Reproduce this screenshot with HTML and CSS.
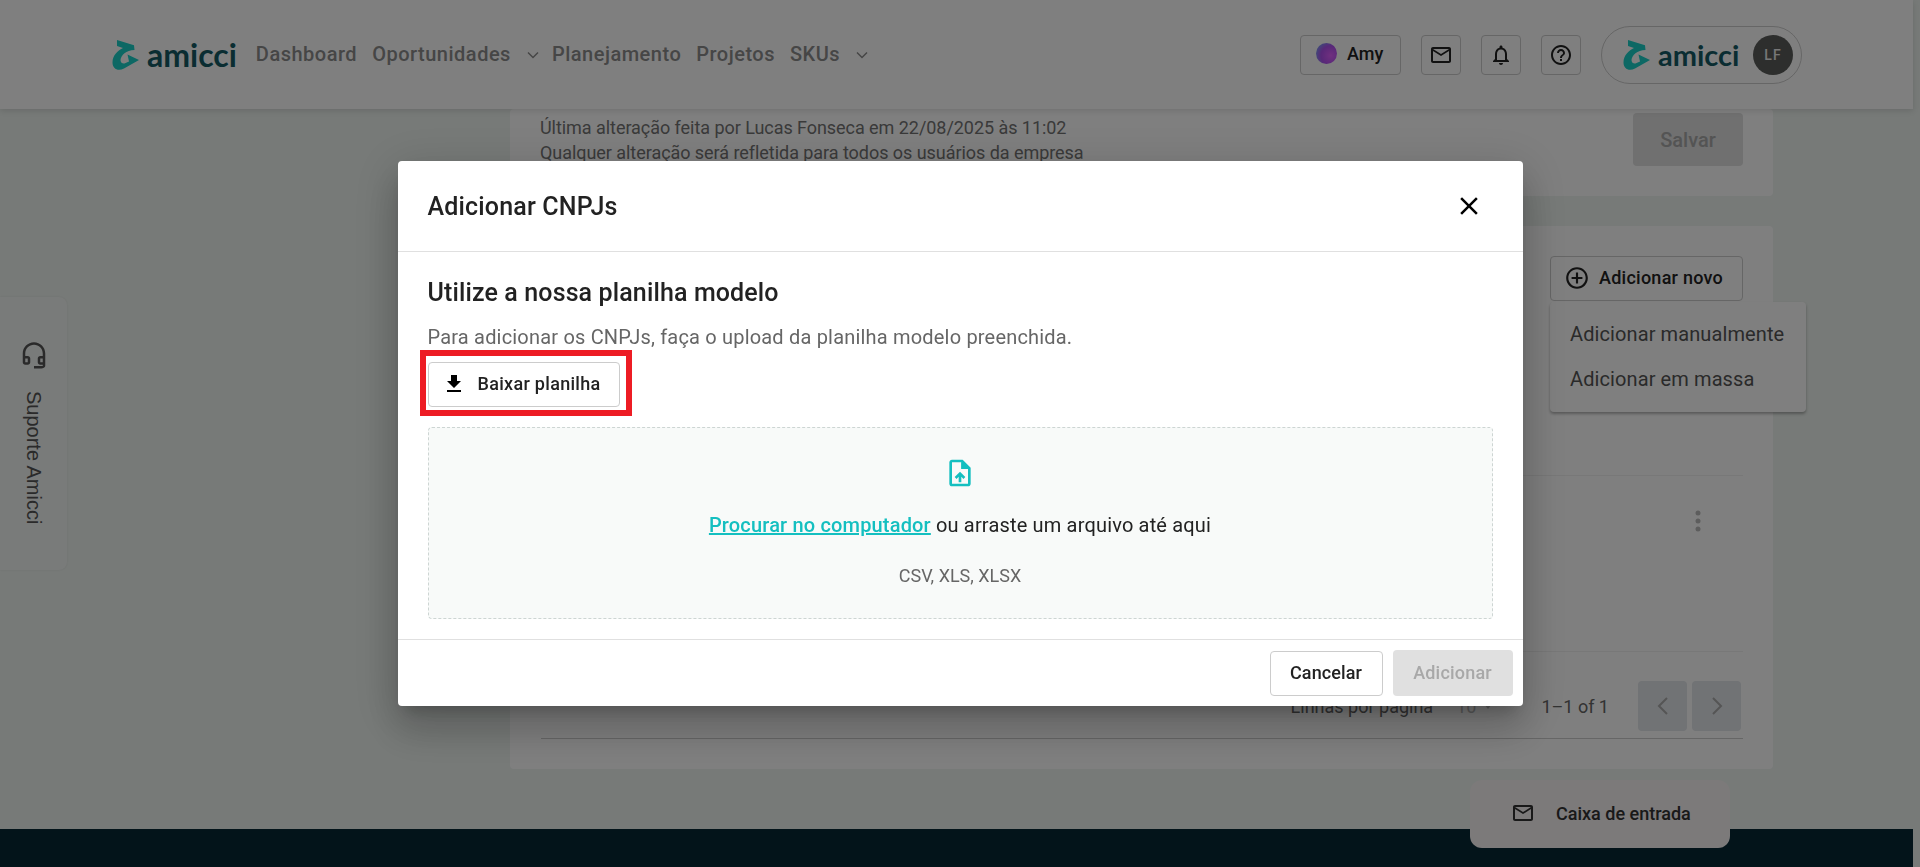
FILE: index.html
```html
<!DOCTYPE html>
<html lang="pt-BR">
<head>
	<meta charset="utf-8">
	<title>Adicionar CNPJs</title>
	<link rel="stylesheet" href="styles.css">
</head>
<body>
	<div class="page">
		<header class="topbar">
			<div class="logo logo-main">
				<svg class="logo-mark" viewBox="0 0 27 30"><path d="M5 0 22 5.300 22.500 10C14 10.500 9 15 8.500 20 8.500 23 11 24 13 23.300L17 21.500 15.500 14.500 27 20 12 28.500C6 31.500.5 29 .5 22.500.5 15 6 10.500 11 8L5 6Z"/></svg>
				<span class="logo-text">amicci</span>
			</div>
			<nav class="nav">
				<a class="nav-link">Dashboard</a>
				<a class="nav-link">Oportunidades</a>
				<svg class="nav-chevron" viewBox="0 0 12 8"><path d="M1 1.500 6 6.500 11 1.500"/></svg>
				<a class="nav-link">Planejamento</a>
				<a class="nav-link">Projetos</a>
				<a class="nav-link">SKUs</a>
				<svg class="nav-chevron" viewBox="0 0 12 8"><path d="M1 1.500 6 6.500 11 1.500"/></svg>
			</nav>
			<div class="tools">
				<button class="tool tool-amy"><span class="orb"></span>Amy</button>
				<button class="tool"><svg viewBox="0 0 24 24"><path d="M20 4H4c-1.100 0-2 .9-2 2v12c0 1.100.9 2 2 2h16c1.100 0 2-.9 2-2V6c0-1.100-.9-2-2-2zm0 14H4V8l8 5 8-5v10zm-8-7L4 6h16l-8 5z"/></svg></button>
				<button class="tool"><svg viewBox="0 0 24 24"><path d="M12 22c1.100 0 2-.9 2-2h-4c0 1.100.9 2 2 2zm6-6v-5c0-3.070-1.630-5.640-4.500-6.320V4c0-.83-.67-1.500-1.500-1.500s-1.500.67-1.500 1.500v.68C7.640 5.360 6 7.920 6 11v5l-2 2v1h16v-1l-2-2zm-2 1H8v-6c0-2.480 1.510-4.500 4-4.500s4 2.020 4 4.500v6z"/></svg></button>
				<button class="tool"><svg viewBox="0 0 24 24"><path d="M11 18h2v-2h-2v2zm1-16C6.480 2 2 6.480 2 12s4.480 10 10 10 10-4.480 10-10S17.520 2 12 2zm0 18c-4.410 0-8-3.590-8-8s3.590-8 8-8 8 3.590 8 8-3.590 8-8 8zm0-14c-2.210 0-4 1.790-4 4h2c0-1.100.9-2 2-2s2 .9 2 2c0 2-3 1.750-3 5h2c0-2.250 3-2.500 3-5 0-2.210-1.790-4-4-4z"/></svg></button>
				<div class="account">
					<div class="logo logo-small">
						<svg class="logo-mark" viewBox="0 0 27 30"><path d="M5 0 22 5.300 22.500 10C14 10.500 9 15 8.500 20 8.500 23 11 24 13 23.300L17 21.500 15.500 14.500 27 20 12 28.500C6 31.500.5 29 .5 22.500.5 15 6 10.500 11 8L5 6Z"/></svg>
						<span class="logo-text">amicci</span>
					</div>
					<span class="avatar">LF</span>
				</div>
			</div>
		</header>

		<main class="content">
			<section class="card card-info">
				<p class="info-text">Última alteração feita por Lucas Fonseca em 22/08/2025 às 11:02<br>Qualquer alteração será refletida para todos os usuários da empresa</p>
				<button class="btn-save">Salvar</button>
			</section>

			<section class="card card-table">
				<div class="table-actions">
					<button class="btn-new">
						<svg viewBox="0 0 24 24"><path d="M13 7h-2v4H7v2h4v4h2v-4h4v-2h-4V7zm-1-5C6.480 2 2 6.480 2 12s4.480 10 10 10 10-4.480 10-10S17.520 2 12 2zm0 18c-4.410 0-8-3.590-8-8s3.590-8 8-8 8 3.590 8 8-3.590 8-8 8z"/></svg>
						Adicionar novo
					</button>
				</div>
				<div class="table-row">
					<svg class="row-menu" viewBox="0 0 6 22"><circle cx="3" cy="3" r="2.500"/><circle cx="3" cy="11" r="2.500"/><circle cx="3" cy="19" r="2.500"/></svg>
				</div>
				<div class="pager">
					<span>Linhas por página</span>
					<span class="pager-size">10 <i class="caret"></i></span>
					<span class="pager-count">1–1 of 1</span>
					<span class="pager-buttons">
						<button class="pager-btn"><svg viewBox="0 0 12 20"><path d="M10 2 2 10 10 18"/></svg></button>
						<button class="pager-btn"><svg viewBox="0 0 12 20"><path d="M2 2 10 10 2 18"/></svg></button>
					</span>
				</div>
			</section>
		</main>

		<footer class="footer"></footer>

		<ul class="menu">
			<li>Adicionar manualmente</li>
			<li>Adicionar em massa</li>
		</ul>

		<aside class="support">
			<svg viewBox="0 0 24 24"><path d="M19 14v3h-2v-3h2M7 14v3H5v-3h2m5-13c-4.970 0-9 4.030-9 9v7c0 1.100.9 2 2 2h2c1.100 0 2-.9 2-2v-3c0-1.100-.9-2-2-2H5v-2c0-3.870 3.130-7 7-7s7 3.130 7 7v2h-2c-1.100 0-2 .9-2 2v3c0 1.100.9 2 2 2h2v1h-7v2h6c1.100 0 3-.9 3-2V10c0-4.970-4.030-9-9-9z"/></svg>
			<span class="support-text">Suporte Amicci</span>
		</aside>

		<div class="inbox">
			<svg viewBox="0 0 24 24"><path d="M20 4H4c-1.100 0-2 .9-2 2v12c0 1.100.9 2 2 2h16c1.100 0 2-.9 2-2V6c0-1.100-.9-2-2-2zm0 14H4V8l8 5 8-5v10zm-8-7L4 6h16l-8 5z"/></svg>
			Caixa de entrada
		</div>
	</div>

	<div class="scrim">
		<div class="modal">
			<div class="modal-head">
				<h2 class="modal-title">Adicionar CNPJs</h2>
				<svg class="modal-close" viewBox="0 0 24 24"><path d="M19 6.410 17.590 5 12 10.590 6.410 5 5 6.410 10.590 12 5 17.590 6.410 19 12 13.410 17.590 19 19 17.590 13.410 12z"/></svg>
			</div>
			<div class="modal-body">
				<h3 class="modal-heading">Utilize a nossa planilha modelo</h3>
				<p class="modal-text">Para adicionar os CNPJs, faça o upload da planilha modelo preenchida.</p>
				<div class="download-wrap">
					<button class="btn-download">
						<svg viewBox="0 0 24 24"><path d="M19 9h-4V3H9v6H5l7 7 7-7zM5 18v2h14v-2H5z"/></svg>
						Baixar planilha
					</button>
				</div>
				<div class="dropzone">
					<svg class="drop-icon" viewBox="0 0 24 24"><path d="M14 2H6c-1.100 0-1.990.9-1.990 2L4 20c0 1.100.89 2 1.990 2H18c1.100 0 2-.9 2-2V8l-6-6zm4 18H6V4h7v5h5v11zM8 15.010l1.410 1.410L11 14.840V19h2v-4.160l1.590 1.590L16 15.010 12.010 11 8 15.010z"/><path d="M13 4h1l4 4v1h-5z"/></svg>
					<p class="drop-text"><a class="drop-link">Procurar no computador</a> ou arraste um arquivo até aqui</p>
					<p class="drop-types">CSV, XLS, XLSX</p>
				</div>
			</div>
			<div class="modal-foot">
				<button class="btn-cancel">Cancelar</button>
				<button class="btn-add">Adicionar</button>
			</div>
		</div>
	</div>
</body>
</html>
```

FILE: styles.css
```css
* {
	box-sizing: border-box;
}

html, body {
	height: 100%;
	margin: 0;
	overflow: hidden;
}

body {
	background-color: #eef4f0;
	color: #222;
	font-family: Roboto, sans-serif;
}

p, h2, h3, ul {
	margin: 0;
	padding: 0;
}

button {
	font-family: inherit;
}

.page {
	display: flex;
	flex-direction: column;
	height: 867px;
	position: relative;
	width: 1913px;
}

/* Top bar */
.topbar {
	align-items: center;
	background-color: #fff;
	box-shadow: 0 2px 6px rgba(0, 0, 0, 0.12);
	display: flex;
	flex: none;
	height: 109px;
	padding: 0 112px;
	position: relative;
	z-index: 2;
}

.logo {
	align-items: center;
	display: flex;
}

.logo-mark {
	fill: #1ad0c8;
	flex: none;
}

.logo-text {
	color: #145a64;
	font-family: Lato, sans-serif;
	font-weight: 700;
}

.logo-main {
	gap: 8px;
	margin-right: 19px;
}

.logo-main .logo-mark {
	height: 30px;
	width: 27px;
}

.logo-main .logo-text {
	font-size: 32px;
}

.logo-small {
	gap: 8px;
}

.logo-small .logo-mark {
	height: 30px;
	width: 27px;
}

.logo-small .logo-text {
	font-size: 29px;
}

.nav {
	align-items: center;
	display: flex;
	gap: 15px;
	padding-bottom: 2px;
}

.nav-link {
	color: #8c8c8c;
	font-size: 20px;
	font-weight: 500;
	letter-spacing: 0.5px;
}

.nav-chevron {
	fill: none;
	height: 8px;
	margin: 2px -2px 0 1px;
	stroke: #8c8c8c;
	stroke-width: 1.500;
	width: 12px;
}

.tools {
	align-items: center;
	display: flex;
	gap: 20px;
	margin-left: auto;
	margin-right: -1px;
}

.tool {
	align-items: center;
	background: none;
	border: 1px solid #ccc;
	border-radius: 4px;
	color: #222;
	display: flex;
	font-size: 18px;
	font-weight: 500;
	height: 40px;
	justify-content: center;
	padding: 0;
	width: 40px;
}

.tool svg {
	fill: #222;
	height: 24px;
	width: 24px;
}

.tool-amy {
	gap: 10px;
	justify-content: flex-start;
	padding: 0 0 2px 15px;
	width: 101px;
}

.orb {
	background: radial-gradient(circle at 70% 60%, #e060ff 0%, #b050f0 50%, #60c0f0 100%);
	border-radius: 50%;
	height: 21px;
	width: 21px;
}

.account {
	align-items: center;
	border: 1px solid #ccc;
	border-radius: 29px;
	display: flex;
	height: 58px;
	justify-content: space-between;
	padding: 0 8px 0 21px;
	width: 201px;
}

.avatar {
	align-items: center;
	background-color: #5a5c5a;
	border-radius: 50%;
	color: #eee;
	display: flex;
	font-size: 14px;
	font-weight: 500;
	height: 40px;
	justify-content: center;
	letter-spacing: 1px;
	width: 40px;
}

/* Page content */
.content {
	display: flex;
	flex-direction: column;
	gap: 30px;
	margin-left: 510px;
	width: 1263px;
}

.card {
	background-color: #fff;
	border-radius: 4px;
}

.card-info {
	display: flex;
	height: 87px;
	justify-content: space-between;
	padding: 4px 30px 0 30px;
}

.info-text {
	color: #747474;
	font-size: 18px;
	letter-spacing: -0.05px;
	line-height: 25px;
	padding-top: 2px;
}

.btn-save {
	background-color: #e0e0e0;
	border: 0;
	border-radius: 4px;
	color: #a8a8a8;
	font-size: 20px;
	font-weight: 500;
	height: 53px;
	width: 110px;
}

.card-table {
	display: flex;
	flex-direction: column;
	height: 543px;
	padding: 30px 30px 0 31px;
}

.table-actions {
	border-bottom: 1px solid #f0f0f0;
	display: flex;
	height: 220px;
	justify-content: flex-end;
}

.btn-new {
	align-items: center;
	background: none;
	border: 1px solid #ccc;
	border-radius: 4px;
	color: #222;
	display: flex;
	font-size: 18px;
	font-weight: 500;
	gap: 9px;
	height: 45px;
	letter-spacing: 0.25px;
	padding: 0 0 2px 13px;
	white-space: nowrap;
	width: 193px;
}

.btn-new svg {
	fill: #222;
	flex: none;
	height: 26px;
	width: 26px;
}

.table-row {
	align-items: center;
	border-bottom: 1px solid #f0f0f0;
	display: flex;
	height: 176px;
	justify-content: flex-end;
	padding-right: 42px;
	padding-bottom: 86px;
}

.row-menu {
	fill: #bbb;
	height: 22px;
	width: 6px;
}

.pager {
	align-items: center;
	border-bottom: 1px solid #ccc;
	color: #666;
	display: flex;
	font-size: 18px;
	height: 87px;
	justify-content: flex-end;
	padding: 22px 2px 0 0;
}

.pager-size {
	align-items: center;
	color: #bbb;
	display: flex;
	gap: 8px;
	margin-left: 23px;
}

.caret {
	border-left: 4px solid transparent;
	border-right: 4px solid transparent;
	border-top: 5px solid #bbb;
}

.pager-count {
	margin-left: 49px;
}

.pager-buttons {
	display: flex;
	gap: 5px;
	margin-left: 29px;
}

.pager-btn {
	align-items: center;
	background-color: #e2e6ea;
	border: 0;
	border-radius: 4px;
	display: flex;
	height: 50px;
	justify-content: center;
	padding: 0;
	width: 49px;
}

.pager-btn svg {
	fill: none;
	height: 20px;
	stroke: #aaa;
	stroke-width: 2;
	width: 12px;
}

.footer {
	background-color: #062834;
	flex: none;
	height: 38px;
	margin-top: auto;
}

/* Things lying over the page */
.menu {
	background-color: #fff;
	border-radius: 4px;
	box-shadow: 0 2px 3px rgba(0, 0, 0, 0.3);
	color: #555;
	font-size: 20px;
	height: 110px;
	left: 1550px;
	letter-spacing: 0.1px;
	list-style: none;
	padding: 10px 20px 0;
	position: absolute;
	top: 302px;
	width: 256px;
}

.menu li {
	line-height: 45px;
	white-space: nowrap;
}

.support {
	align-items: center;
	background-color: #f3f6f4;
	border-radius: 0 8px 8px 0;
	box-shadow: 0 0 2px rgba(0, 0, 0, 0.08);
	color: #555;
	display: flex;
	flex-direction: column;
	font-family: "Liberation Sans", sans-serif;
	font-size: 20px;
	gap: 20px;
	height: 273px;
	left: 0;
	padding-top: 44px;
	position: absolute;
	top: 297px;
	width: 67px;
}

.support svg {
	fill: #555;
	height: 30px;
	width: 30px;
}

.support-text {
	writing-mode: vertical-rl;
}

.inbox {
	align-items: center;
	background-color: #f8f4f4;
	border-radius: 12px;
	color: #333;
	display: flex;
	font-size: 18px;
	font-weight: 500;
	gap: 21px;
	height: 68px;
	left: 1470px;
	padding: 0 0 2px 41px;
	position: absolute;
	top: 780px;
	width: 260px;
}

.inbox svg {
	fill: #333;
	height: 24px;
	width: 24px;
}

/* Dialog */
.scrim {
	align-items: center;
	background-color: rgba(0, 0, 0, 0.5);
	display: flex;
	inset: 0;
	justify-content: center;
	position: fixed;
	z-index: 10;
}

.modal {
	background-color: #fff;
	border-radius: 4px;
	box-shadow: 0 11px 15px -7px rgba(0, 0, 0, 0.2), 0 24px 38px 3px rgba(0, 0, 0, 0.14), 0 9px 46px 8px rgba(0, 0, 0, 0.12);
	display: flex;
	flex-direction: column;
	height: 545px;
	width: 1125px;
}

.modal-head {
	align-items: center;
	border-bottom: 1px solid #e0e0e0;
	display: flex;
	flex: none;
	height: 91px;
	justify-content: space-between;
	padding: 0 39px 0 30px;
}

.modal-title {
	font-size: 25px;
	font-weight: 500;
	letter-spacing: 0.17px;
}

.modal-close {
	height: 30px;
	width: 30px;
}

.modal-body {
	border-bottom: 1px solid #e0e0e0;
	flex: none;
	height: 388px;
	padding: 25px 30px 0;
}

.modal-heading {
	font-size: 25px;
	font-weight: 500;
	letter-spacing: 0.13px;
	line-height: 32px;
}

.modal-text {
	color: #666;
	font-size: 20px;
	letter-spacing: 0.19px;
	line-height: 24px;
	margin-top: 16px;
}

.download-wrap {
	margin-top: 13px;
	position: relative;
	width: 192px;
}

/* red highlight round the button */
.download-wrap::after {
	border: 6px solid #ed1c24;
	bottom: -9px;
	content: "";
	left: -8px;
	position: absolute;
	right: -12px;
	top: -12px;
}

.btn-download {
	align-items: center;
	background-color: #fff;
	border: 1px solid #ccc;
	border-radius: 4px;
	color: #222;
	display: flex;
	font-size: 18px;
	font-weight: 500;
	gap: 12px;
	height: 45px;
	letter-spacing: 0.3px;
	padding: 0 0 2px 13px;
	width: 192px;
}

.btn-download svg {
	flex: none;
	height: 24px;
	width: 24px;
}

.dropzone {
	align-items: center;
	background-color: #f8faf9;
	border: 1px dashed #cdd5d3;
	border-radius: 4px;
	display: flex;
	flex-direction: column;
	height: 192px;
	margin-top: 20px;
	padding-top: 29px;
}

.drop-icon {
	fill: #14bfc0;
	height: 32px;
	width: 32px;
}

.drop-text {
	font-size: 20px;
	letter-spacing: 0.17px;
	line-height: 24px;
	margin-top: 24px;
}

.drop-link {
	color: #14bfc0;
	font-weight: 500;
	text-decoration: underline;
	text-decoration-thickness: 2px;
}

.drop-types {
	color: #666;
	font-size: 18px;
	line-height: 24px;
	margin-top: 27px;
}

.modal-foot {
	align-items: center;
	display: flex;
	flex: 1;
	gap: 10px;
	justify-content: flex-end;
	padding: 0 10px 0 0;
}

.btn-cancel {
	background-color: #fff;
	border: 1px solid #ccc;
	border-radius: 4px;
	color: #222;
	font-size: 18px;
	font-weight: 500;
	height: 45px;
	letter-spacing: 0.1px;
	padding-bottom: 3px;
	width: 113px;
}

.btn-add {
	background-color: #e0e0e0;
	border: 0;
	border-radius: 4px;
	color: #a8a8a8;
	font-size: 18px;
	font-weight: 500;
	height: 46px;
	letter-spacing: 0.2px;
	padding-bottom: 3px;
	width: 120px;
}
```
